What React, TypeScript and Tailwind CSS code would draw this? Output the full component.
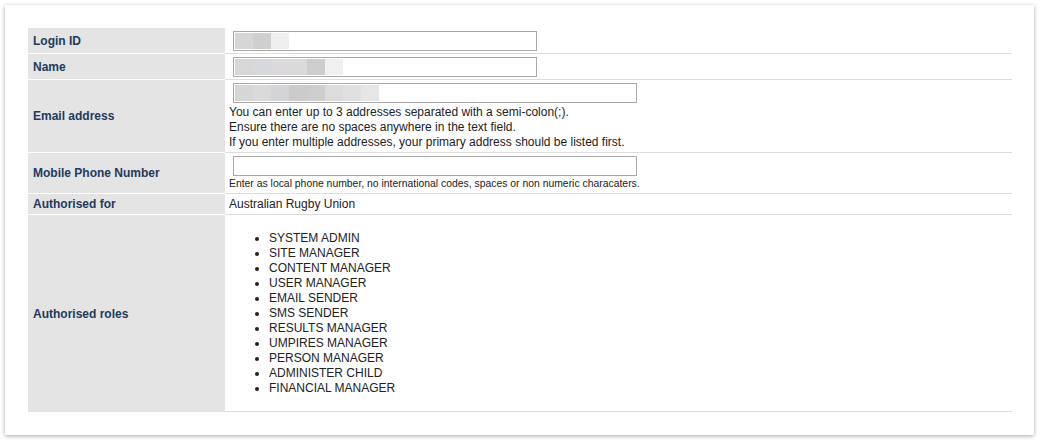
const font = { fontFamily: '"Liberation Sans", Arial, sans-serif' };

const roles = [
  "SYSTEM ADMIN",
  "SITE MANAGER",
  "CONTENT MANAGER",
  "USER MANAGER",
  "EMAIL SENDER",
  "SMS SENDER",
  "RESULTS MANAGER",
  "UMPIRES MANAGER",
  "PERSON MANAGER",
  "ADMINISTER CHILD",
  "FINANCIAL MANAGER",
];

function FakeInput({ width, blocks }: { width: string; blocks?: string[] }) {
  return (
    <div className={`ml-[4px] flex h-[20px] items-center border border-[#a9a9a9] bg-white p-[1px] ${width}`}>
      {blocks?.map((c, i) => (
        <div key={i} className="h-[16px] w-[18px]" style={{ background: c }} />
      ))}
    </div>
  );
}

function Row({ label, children, last }: { label: string; children: React.ReactNode; last?: boolean }) {
  return (
    <div className="grid grid-cols-[197px_1fr]">
      <div className={`flex items-center bg-[#e4e4e4] pl-[5px] text-[12px] font-bold text-[#1f3a5c] ${last ? "" : "border-b border-white"}`}>
        {label}
      </div>
      <div className="border-b border-[#dddddd] pb-[2px] pl-[4px] pt-[3px] text-[12px] leading-[15px] text-[#222]">
        {children}
      </div>
    </div>
  );
}

export default function App() {
  return (
    <div className="min-h-[440px] bg-white pl-[5px] pt-[5px]" style={font}>
      <div className="w-[1029px] bg-white px-[23px] py-[23px] pr-[22px] shadow-[0_1px_4px_rgba(0,0,0,0.35)]">
        <Row label="Login ID">
          <FakeInput width="w-[304px]" blocks={["#d6d6d6", "#cfcfcf", "#efefef"]} />
        </Row>
        <Row label="Name">
          <FakeInput
            width="w-[304px]"
            blocks={["#d8d6d6", "#d6d8dc", "#dbd9db", "#dadada", "#cdcdcf", "#f0f0f0"]}
          />
        </Row>
        <Row label="Email address">
          <FakeInput
            width="w-[404px]"
            blocks={["#d6d6d6", "#dadada", "#d4d4d6", "#cbcbcb", "#cdcdcd", "#dcdcdc", "#e0e0e0", "#e6e6e6"]}
          />
          <div className="pt-[2px]">
            <div>You can enter up to 3 addresses separated with a semi-colon(;).</div>
            <div>Ensure there are no spaces anywhere in the text field.</div>
            <div>If you enter multiple addresses, your primary address should be listed first.</div>
          </div>
        </Row>
        <Row label="Mobile Phone Number">
          <FakeInput width="w-[404px]" />
          <div className="pb-[1px] pt-[1px] text-[10.4px] leading-[13px]">
            Enter as local phone number, no international codes, spaces or non numeric characaters.
          </div>
        </Row>
        <Row label="Authorised for">
          <div>Australian Rugby Union</div>
        </Row>
        <Row label="Authorised roles" last>
          <ul className="my-[13px] list-disc pl-[40px]">
            {roles.map((r) => (
              <li key={r}>{r}</li>
            ))}
          </ul>
        </Row>
      </div>
    </div>
  );
}
